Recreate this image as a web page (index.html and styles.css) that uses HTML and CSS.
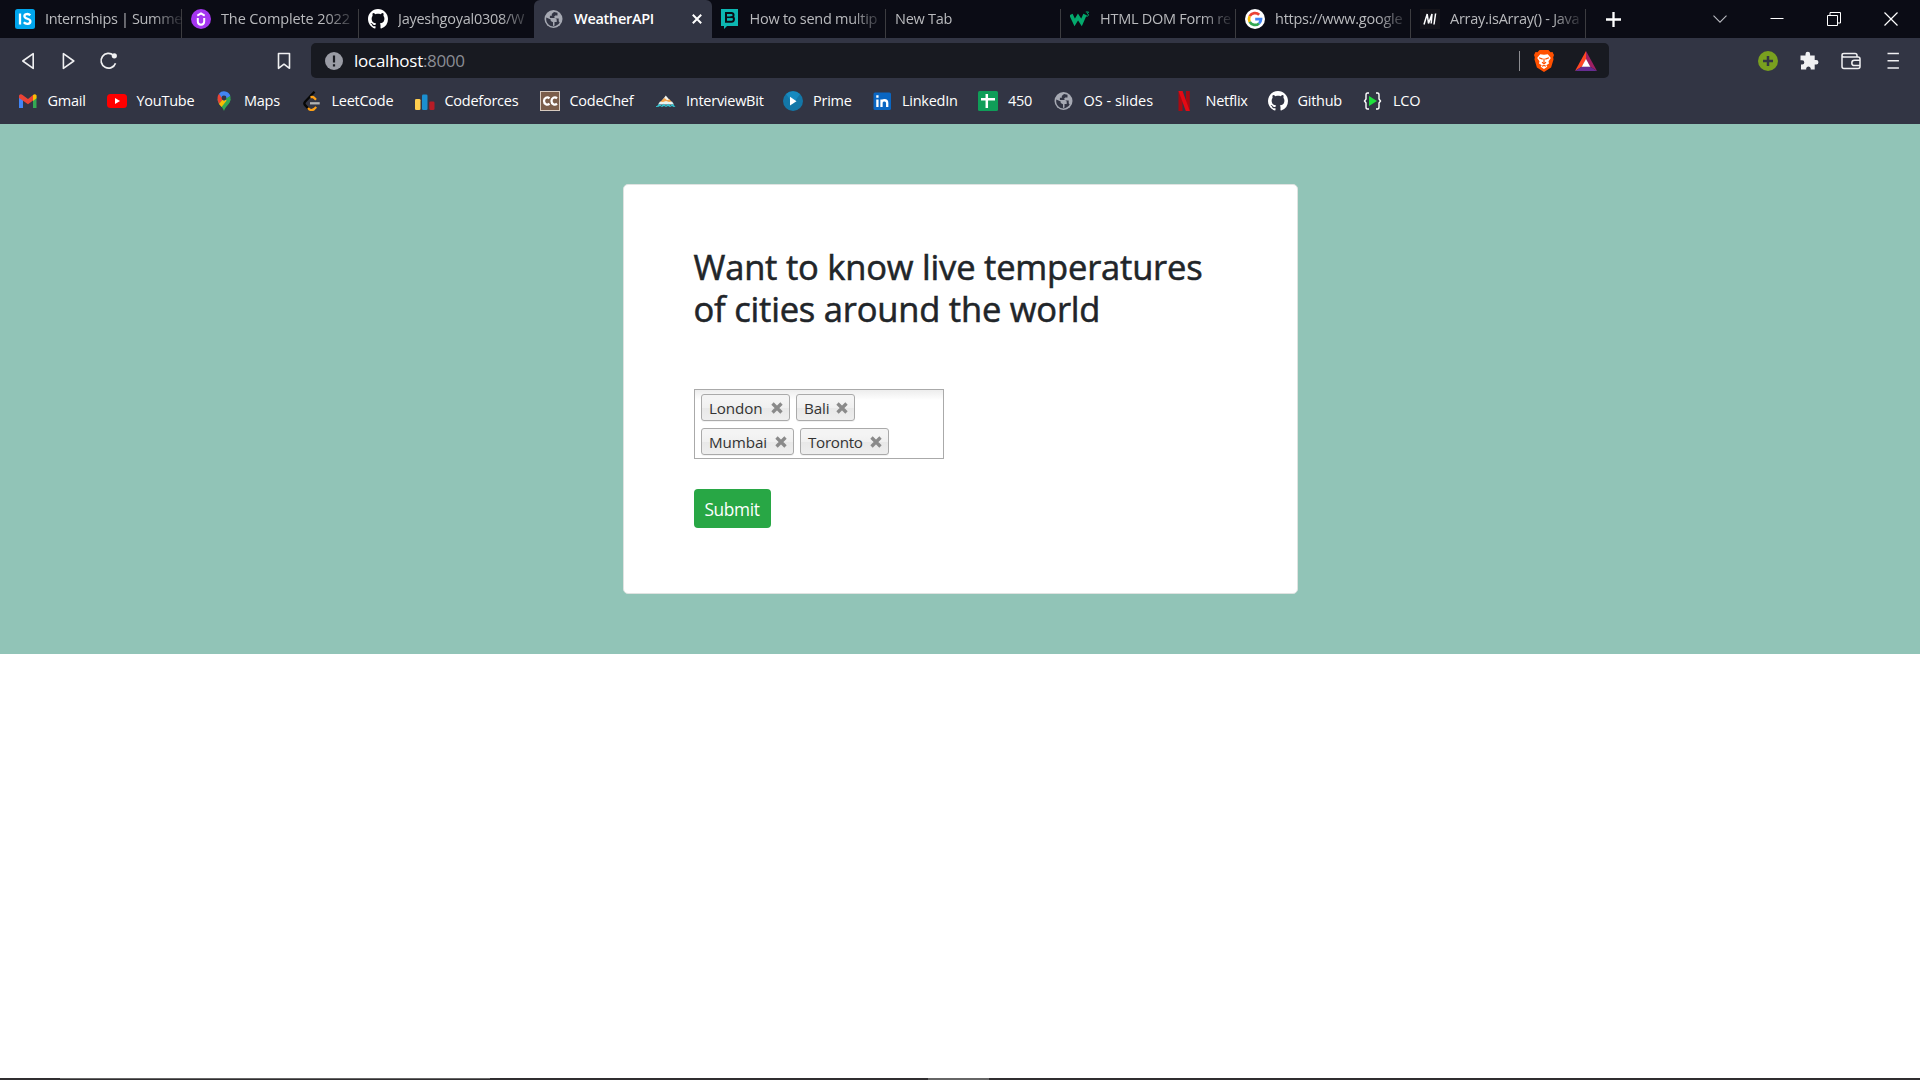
FILE: index.html
```html
<!DOCTYPE html>
<html lang="en">
<head>
<meta charset="utf-8">
<title>WeatherAPI</title>
<link rel="stylesheet" href="styles.css">
</head>
<body>
<svg class="defs" width="0" height="0">
  <symbol id="github" viewBox="0 0 16 16"><path d="M8 0C3.58 0 0 3.58 0 8c0 3.54 2.29 6.53 5.47 7.59.4.07.55-.17.55-.38 0-.19-.01-.82-.01-1.49-2.01.37-2.53-.49-2.69-.94-.09-.23-.48-.94-.82-1.13-.28-.15-.68-.52-.01-.53.63-.01 1.08.58 1.23.82.72 1.21 1.87.87 2.33.66.07-.52.28-.87.51-1.07-1.78-.2-3.64-.89-3.64-3.95 0-.87.31-1.59.82-2.15-.08-.2-.36-1.02.08-2.12 0 0 .67-.21 2.2.82.64-.18 1.32-.27 2-.27s1.36.09 2 .27c1.53-1.04 2.2-.82 2.2-.82.44 1.1.16 1.92.08 2.12.51.56.82 1.27.82 2.15 0 3.07-1.87 3.75-3.65 3.95.29.25.54.73.54 1.48 0 1.07-.01 1.93-.01 2.2 0 .21.15.46.55.38A8.01 8.01 0 0 0 16 8c0-4.42-3.58-8-8-8z" fill="#fff"/></symbol>
  <symbol id="globe" viewBox="0 0 20 20"><circle cx="9.500" cy="10" r="9" fill="#a6a9b3"/><path d="M10 3 7.800 5v1.800H5.900V9h5.300l1.500 1.500v2.400h-2.200v3.500l-1.500.6v-3.800L6.700 12v-1.500L2.300 8.500C1.800 11 2.500 13.500 4.200 15.200c1.600 1.700 3.600 2.300 5.300 2.200 3-.2 5-1.700 6.200-3.800l-1-1.300V9.500h-3.200L10 8l1.200-1.500h2.300V3.800z" fill="#323544"/></symbol>
</svg>

<header class="browser">
  <div class="tabs">
    <div class="tab first">
      <svg class="fav" viewBox="0 0 20 20"><rect width="20" height="20" rx="2.500" fill="#00a5ec"/><path d="M5 4.500v11M15.300 6.300C13.500 4.300 9.300 4.600 9.400 7.200c.1 3.100 6.100 2 6 5.200-.1 3-4.700 3.200-6.600.9" fill="none" stroke="#fff" stroke-width="2.300"/></svg>
      <span class="label tight">Internships | Summe</span>
    </div>
    <div class="tab">
      <svg class="fav" viewBox="0 0 20 20"><circle cx="10" cy="10" r="10" fill="#a435f0"/><path d="M6.300 6.600 10 4.500l3.700 2.100M6.800 9v3.500c0 4.200 6.400 4.200 6.400 0V9" fill="none" stroke="#fff" stroke-width="2"/></svg>
      <span class="label loose">The Complete 2022</span>
    </div>
    <div class="tab last-before">
      <svg class="fav"><use href="#github"/></svg>
      <span class="label">Jayeshgoyal0308/W</span>
    </div>
    <div class="tab active">
      <svg class="fav"><use href="#globe"/></svg>
      <span class="label">WeatherAPI</span>
      <svg class="close" viewBox="0 0 10 10"><path d="M.8.800 9.200 9.200M9.200.8.8 9.200" stroke="#fff" stroke-width="2"/></svg>
    </div>
    <div class="tab after">
      <svg class="fav" viewBox="0 0 20 20"><path d="M1 0h17v17H7l-3 3v-3H1z" fill="#0cb7b2"/><path d="M6 4h5.500c2.600 0 2.600 3.400.9 4 2.300.6 2 4.700-.8 4.700H6z" fill="none" stroke="#0b0c15" stroke-width="2"/><path d="M6 8.300h6" stroke="#0b0c15" stroke-width="1.600"/></svg>
      <span class="label">How to send multip</span>
    </div>
    <div class="tab"><span class="label">New Tab</span></div>
    <div class="tab">
      <svg class="fav" viewBox="0 0 20 20"><path d="m1 5.500 3.700 8L8 8l3.500 5.500 3.500-8" fill="none" stroke="#04aa6d" stroke-width="3.600"/><path d="M15.800 3h2.800l-1.300 1.700c1.800.2 1.500 2.500-.3 2.500l-1.300-.4" fill="none" stroke="#04aa6d"/></svg>
      <span class="label">HTML DOM Form re</span>
    </div>
    <div class="tab">
      <svg class="fav" viewBox="0 0 20 20"><circle cx="10" cy="10" r="10" fill="#fff"/><g fill="none" stroke-width="2.700"><path d="M14.200 5.800A6 6 0 0 0 4.700 7.200" stroke="#ea4335"/><path d="M4.700 7.200a6 6 0 0 0 0 5.600" stroke="#fbbc05"/><path d="M4.700 12.800a6 6 0 0 0 9.300 1.600" stroke="#34a853"/><path d="M14 14.400a6 6 0 0 0 2-4.300h-5.800" stroke="#4285f4"/></g></svg>
      <span class="label">https://www.google</span>
    </div>
    <div class="tab">
      <svg class="fav" viewBox="0 0 20 20"><rect width="20" height="20" fill="#15141a"/><path d="M4 15.500 7.200 5l1.300 9.500L12 5l-.8 9.500M15.600 4.500l-1.600 11" fill="none" stroke="#fff" stroke-width="1.500"/></svg>
      <span class="label">Array.isArray() - Java</span>
    </div>
    <svg class="newtab" viewBox="0 0 15 15"><path d="M7.500 0v15M0 7.500h15" stroke="#fff" stroke-width="2.300"/></svg>
    <div class="window">
      <svg viewBox="0 0 14 14"><path d="m.5 3.700 6.500 6.500 6.500-6.500" fill="none" stroke="#b9bac0" stroke-width="1.100"/></svg>
      <svg viewBox="0 0 14 14"><path d="M.5 6.500h13" stroke="#fff"/></svg>
      <svg viewBox="0 0 14 14"><path d="M.500 3.500h10v10H.5zM3 3.500v-3h10.500V11h-3" fill="none" stroke="#fff"/></svg>
      <svg viewBox="0 0 14 14"><path d="m.5.500 13 13M13.500.5.500 13.500" stroke="#fff" stroke-width="1.200"/></svg>
    </div>
  </div>

  <div class="toolbar">
    <div class="nav">
      <svg viewBox="0 0 20 20"><path d="M14.200 2.600v14.800L3.800 10z" fill="none" stroke="#f0f0f2" stroke-width="1.600" stroke-linejoin="round"/></svg>
      <svg viewBox="0 0 20 20"><path d="M4.400 2.600v14.800L14.800 10z" fill="none" stroke="#f0f0f2" stroke-width="1.600" stroke-linejoin="round"/></svg>
      <svg viewBox="0 0 20 20"><path d="M14.500 4.300A7.400 7.400 0 1 0 16.500 12.200" fill="none" stroke="#f0f0f2" stroke-width="1.700"/><circle cx="15.300" cy="4.800" r="2.600" fill="#f0f0f2"/></svg>
    </div>
    <svg class="mark" viewBox="0 0 14 18"><path d="M1.500 1.500h11v14.800L7 12.200l-5.500 4.100z" fill="none" stroke="#f0f0f2" stroke-width="1.600" stroke-linejoin="round"/></svg>
    <div class="address">
      <svg class="info" viewBox="0 0 18 18"><circle cx="9" cy="9" r="9" fill="#9a9ca5"/><path d="M9 3.500v7M9 12.300v2.300" stroke="#181a21" stroke-width="2.200"/></svg>
      <span class="url">localhost<span class="port">:8000</span></span>
      <i class="bar"></i>
      <svg class="brave" viewBox="0 0 20 22"><path d="M5.500 0h9l2 2.300 2-.2L20 5l-.8 2.200.3 2.300-2.400 8L10 22l-7.100-4.500-2.400-8 .3-2.300L0 5l1.500-2.900 2 .2z" fill="#ff5000"/><path d="m6.200 4.200 3.800.6 3.800-.6 3 3.700-2.300 3.300.5 2.300-2.700 1.700 1 1.600-3.300 2.100-3.300-2.100 1-1.600L5 13.500l.5-2.300-2.300-3.300z" fill="#fff"/><path d="m5 7.800 3.700 1.300M15 7.800l-3.700 1.300M10 8.500v4M8 12.200l2 1.500 2-1.500M8 16.200l2-.8 2 .8" stroke="#ff5000" fill="none" stroke-width="1.200"/></svg>
      <svg class="bat" viewBox="0 0 22 20"><path d="M11 0 0 20l7-4.500 4-7z" fill="#ff4724"/><path d="M11 0v8.500l4 7 7 4.500z" fill="#9e1f63"/><path d="M0 20h22l-7-4.500H7z" fill="#662d91"/><path d="m11 8 4.300 7.700H6.700z" fill="#fff"/></svg>
    </div>
    <div class="actions">
      <svg viewBox="0 0 20 20"><circle cx="10" cy="10" r="10" fill="#79a01f"/><path d="M10 5v10M5 10h10" stroke="#323544" stroke-width="2.500"/></svg>
      <svg viewBox="0 0 20 20"><path d="M1 4.500h4.500V3a2.300 2.300 0 0 1 4.600 0v1.500h4.600V9h1.500a2.200 2.200 0 0 1 0 4.500h-1.500v5h-4v-1.200a2.300 2.300 0 0 0-4.500 0v1.200H1v-5h1.200a2 2 0 0 0 0-4.200H.5V4.500z" fill="#f0f0f2"/></svg>
      <svg viewBox="0 0 20 20"><path d="M1 4.200v11.300q0 2 2 2h14q2 0 2-2V8q0-2-2-2H2.800Q1 6 1 4.300 1 2.600 2.800 2.600H14q2 0 2 2V6M19 9.200h-5.500a2.700 2.700 0 0 0 0 5.400H19" fill="none" stroke="#f0f0f2" stroke-width="1.500"/></svg>
      <svg viewBox="0 0 20 20"><path d="M4.500 2.500h11.400M4.500 9.700h11.400M4.500 17h11.400" stroke="#f0f0f2" stroke-width="1.600"/></svg>
    </div>
  </div>

  <nav class="bookmarks">
    <a><svg viewBox="0 0 20 20"><path d="M1 5v12h4V9z" fill="#4285f4"/><path d="M15 9v8h3.500V5z" fill="#34a853"/><path d="M15 5v5l3.500-2.800V4.600q-1.300-2.200-3.500-.6z" fill="#fbbc04"/><path d="M1 4.500Q2.500 2.500 4.600 4L10 8l5-4v5.500l-5 3.800L5 9.700 1 7z" fill="#ea4335"/></svg><span>Gmail</span></a>
    <a><svg viewBox="0 0 20 20"><rect y="3" width="20" height="14" rx="3.500" fill="#f00"/><path d="m8 7 5 3-5 3z" fill="#fff"/></svg><span>YouTube</span></a>
    <a><svg viewBox="0 0 20 20"><path d="M3.500 8c0 5 5 7 6.500 12 1.500-5 6.500-7 6.500-12z" fill="#34a853"/><path d="M3.500 7A6.500 6.500 0 0 1 5 2.800L10 7l-5 6C4 11 3.500 9 3.500 7z" fill="#ea4335"/><path d="m5 13 5-6 3.500 1.500L7.500 16z" fill="#fbbc04"/><path d="M5 2.800A6.500 6.500 0 0 1 16.300 5L10 10z" fill="#4285f4"/><path d="M16.300 5c.6 2.500 0 5-1.300 7l-4-4z" fill="#34a853"/><circle cx="10" cy="7" r="2.400" fill="#323544"/></svg><span>Maps</span></a>
    <a><svg viewBox="0 0 20 20"><path d="m12.500.8-9.400 10q-1.500 1.700 0 3.300l3.800 4" fill="none" stroke="#070706" stroke-width="2.300"/><path d="m8.500 6.200 1.700-.3q1 0 2 1l1.800 1.800M6 17l1.500 1.500q2.500 1.300 4.700-.5l2-2" fill="none" stroke="#ffa116" stroke-width="2.300"/><path d="M8 12.300h9.700" stroke="#b3b3b3" stroke-width="2.300"/></svg><span>LeetCode</span></a>
    <a><svg viewBox="0 0 20 20"><rect y="8" width="5.500" height="11" rx="1.300" fill="#ffce4f"/><rect x="7" y="3.500" width="5.500" height="15.500" rx="1.300" fill="#1b8fd0"/><rect x="14.300" y="10.500" width="5.200" height="8.500" rx="1.300" fill="#b71c26"/></svg><span>Codeforces</span></a>
    <a><svg viewBox="0 0 20 20"><rect x=".5" y=".5" width="19" height="19" fill="#7b5e4b" stroke="#d6cabf"/><path d="M9.500 7.300C7.200 5.300 4 7 4 10s3.200 4.700 5.500 2.700M17 7.300c-2.300-2-5.500-.3-5.500 2.700s3.200 4.700 5.500 2.700" fill="none" stroke="#fff" stroke-width="2.300"/></svg><span>CodeChef</span></a>
    <a><svg viewBox="0 0 20 20"><path d="M6 9.500 9.800 4.500 14 9.500z" fill="#f6f6ee"/><path d="m5.500 9.500 3-2.500 3 2.500 2-1.500 2.500 3.500H4z" fill="#f5a64c"/><path d="m4 10.500 3 .5 3-1 3 1 3-.5 2 3H2z" fill="#e9f3ef"/><path d="m0 15.800 3.500-3 2 2 2.300-2 2.200 2 2.200-2 2.300 2 2-2 3 3-2 .2-1.500-1-2 1-2-1-2 1-2-1-2 1-2-1-2 1-2-1z" fill="#35c3ce"/></svg><span>InterviewBit</span></a>
    <a><svg viewBox="0 0 20 20"><circle cx="10" cy="10" r="10" fill="#1377a8"/><path d="M3 3a10 10 0 0 1 14 0L10 13z" fill="#1a98d0" opacity=".6"/><path d="m7 5.800 6.500 4.400L7 14.400z" fill="#fff"/></svg><span>Prime</span></a>
    <a><svg viewBox="0 0 20 20"><rect x="1.500" y="1.500" width="17.500" height="17.500" rx="1.500" fill="#0a66c2"/><path d="M5.400 8.500v7.500M5.400 4.300v2.400M9.500 16V8.500M9.500 11.500c.5-3 5.700-3.200 5.700.5v4" fill="none" stroke="#fff" stroke-width="2.300"/></svg><span>LinkedIn</span></a>
    <a><svg viewBox="0 0 20 20"><rect width="20" height="20" rx="1.500" fill="#0f9d58"/><path d="M8.800 3v14M3 8.200h14" stroke="#fff" stroke-width="2.500"/></svg><span>450</span></a>
    <a><svg><use href="#globe"/></svg><span class="slides">OS - slides</span></a>
    <a><svg viewBox="0 0 20 20"><path d="M2.500 0h4v20h-4zM10 0h3.800v20H10z" fill="#a80a12"/><path d="M2.500 0h4l7.300 20h-4z" fill="#e50914"/></svg><span>Netflix</span></a>
    <a><svg><use href="#github"/></svg><span>Github</span></a>
    <a><svg viewBox="0 0 20 20"><path d="M6 2H4.500Q3 2 3 4v4l-1.500 2L3 12v4q0 2 1.500 2H6M13 2h1.500Q16 2 16 4v4l1.500 2-1.500 2v4q0 2-1.500 2H13" fill="none" stroke="#fff" stroke-width="1.400"/><path d="m6 5 8 5-8 5z" fill="#1fe03c"/></svg><span>LCO</span></a>
  </nav>
</header>

<main class="hero">
  <section class="card">
    <h2>Want to know live temperatures<br>of cities around the world</h2>
    <div class="choices">
      <div class="row">
        <span class="chip">London<svg viewBox="0 0 12 12"><path d="m1.500 1.500 9 9M10.500 1.500l-9 9"/></svg></span>
        <span class="chip short">Bali<svg viewBox="0 0 12 12"><path d="m1.500 1.500 9 9M10.500 1.500l-9 9"/></svg></span>
      </div>
      <div class="row">
        <span class="chip">Mumbai<svg viewBox="0 0 12 12"><path d="m1.500 1.500 9 9M10.500 1.500l-9 9"/></svg></span>
        <span class="chip long">Toronto<svg viewBox="0 0 12 12"><path d="m1.500 1.500 9 9M10.500 1.500l-9 9"/></svg></span>
      </div>
    </div>
    <button class="submit">Submit</button>
  </section>
</main>
<footer class="taskbar"><i class="window-edge"></i><i class="running"></i></footer>
</body>
</html>
```
FILE: styles.css
```css
* { box-sizing: border-box; }
body {
  margin: 0;
  height: 1080px;
  display: flex;
  flex-direction: column;
  background: #fff;
  font-family: "Open Sans", "Noto Sans", sans-serif;
}
svg { display: block; flex: none; }
.defs { position: absolute; }

.browser { height: 124px; background: #323544; color: #fff; font-size: 14.5px; letter-spacing: -.26px; }

.tabs { display: flex; height: 38px; background: #0b0c15; }
.tab {
  display: flex;
  align-items: center;
  gap: 10px;
  width: 175px;
  padding: 0 9px;
  color: #b9babd;
  background: linear-gradient(#3c3c40, #3c3c40) right bottom / 1px 29px no-repeat;
}
.tab.first { width: 182px; padding-left: 15px; }
.tab:nth-child(2) { width: 177px; }
.tab.last-before { background: none; }
.tab.active {
  width: 177.500px;
  padding: 0 10px;
  background: #323544;
  border-radius: 6px 6px 0 0;
  color: #fff;
  font-weight: 600;
}
.tab.after { width: 174.500px; padding-left: 8px; }
.fav { width: 20px; height: 20px; }
.label { flex: 1; white-space: nowrap; line-height: 24px; }
.tab:not(.active) .label {
  margin-right: -5px;
  -webkit-mask-image: linear-gradient(90deg, #000 calc(100% - 30px), rgba(0,0,0,.1));
  mask-image: linear-gradient(90deg, #000 calc(100% - 30px), rgba(0,0,0,.1));
}
.label.tight { letter-spacing: -.35px; }
.label.loose { letter-spacing: -.12px; }
.active .label { letter-spacing: -.3px; }
.close { width: 10px; height: 10px; }
.newtab { width: 15px; height: 15px; align-self: center; margin-left: 20px; }
.window { display: flex; align-items: center; gap: 43px; margin: 0 22px 0 auto; }
.window svg { width: 14px; height: 14px; }

.toolbar { display: flex; align-items: center; height: 45px; }
.nav { display: flex; gap: 20px; margin-left: 18.500px; }
.nav svg { width: 20px; height: 20px; }
.mark { width: 14px; height: 18px; margin-left: 158px; }
.address {
  display: flex;
  align-items: center;
  width: 1298px;
  height: 35px;
  margin-left: 20.500px;
  padding: 0 12px 0 14px;
  background: #181a21;
  border-radius: 5px;
}
.info { width: 18px; height: 18px; }
.url { flex: 1; margin: -1px 0 0 11px; font-size: 17px; letter-spacing: -.25px; }
.port { color: #8b8d94; letter-spacing: -.35px; }
.bar { width: 1px; height: 20px; background: #8c8d92; }
.brave { width: 20px; height: 22px; margin-left: 14px; }
.bat { width: 22px; height: 20px; margin-left: 21px; }
.actions { display: flex; gap: 21.600px; margin: 0 17px 0 auto; }
.actions svg { width: 20px; height: 20px; }

.bookmarks {
  display: grid;
  grid-template-columns: 89px 107.500px 87.500px 113px 125px 116.500px 127px 89px 106px 75.500px 122px 92px 95.500px 80px;
  height: 36px;
  padding-left: 17.500px;
}
.bookmarks a { display: flex; align-items: center; gap: 10px; white-space: nowrap; }
.bookmarks a span { margin-top: -2px; }
.bookmarks .slides { letter-spacing: 0; }
.bookmarks svg { width: 20px; height: 20px; }

.hero { display: flex; justify-content: center; height: 530px; padding-top: 60px; background: #91c4b7; }
.card {
  width: 675px;
  height: 410px;
  padding: 61px 70px;
  background: #fff;
  border: 1px solid #dfe3e1;
  border-radius: 5px;
}
h2 {
  margin: 0;
  font-size: 34.500px;
  line-height: 42.200px;
  font-weight: 500;
  letter-spacing: -.2px;
  color: #212529;
  white-space: nowrap;
  -webkit-text-stroke: .55px #212529;
}
.choices {
  display: flex;
  flex-direction: column;
  gap: 7px;
  width: 250px;
  height: 70px;
  margin-top: 59px;
  padding: 4px 6px;
  border: 1px solid #aaa;
  background: linear-gradient(#eee 1%, #fff 15%);
}
.row { display: flex; gap: 6px; }
.chip {
  display: flex;
  align-items: center;
  justify-content: space-between;
  min-width: 89px;
  height: 27px;
  padding: 0 6px 0 7.500px;
  gap: 7.500px;
  border: 1px solid #aaa;
  border-radius: 3px;
  background: linear-gradient(#f4f4f4 20%, #f0f0f0 50%, #e8e8e8 52%, #eee);
  box-shadow: 0 1px 0 rgba(0,0,0,.05);
  font-size: 15.200px;
  letter-spacing: -.1px;
  color: #333;
}
.chip.short { min-width: 59px; gap: 6px; }
.chip.long { letter-spacing: -.3px; }
.chip svg { width: 12px; height: 12px; fill: none; stroke: #8a8a8a; stroke-width: 3.300px; }
.submit {
  display: block;
  width: 77px;
  height: 39px;
  margin-top: 30px;
  padding: 1px 0 0;
  border: 0;
  border-radius: 4px;
  background: #28a745;
  color: #fff;
  font: 17.300px "Open Sans", sans-serif;
  letter-spacing: -.35px;
}

.taskbar { display: flex; height: 2px; margin-top: auto; background: #302e30; }
.window-edge { width: 430px; margin-left: 60px; border-top: 1px solid #666; }
.running { width: 61px; margin-left: 438px; background: #666; }
```
